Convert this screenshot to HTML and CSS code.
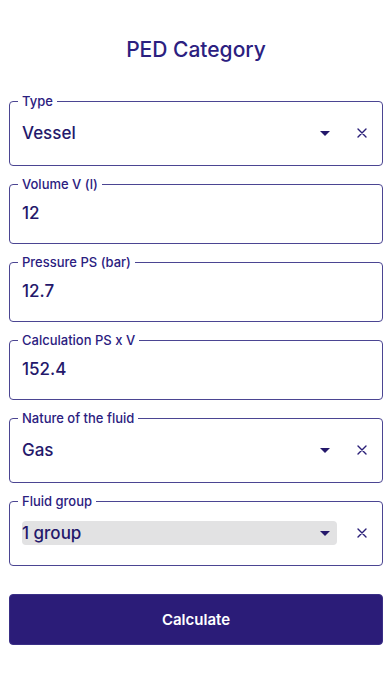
FILE: index.html
```html
<!DOCTYPE html>
<html lang="en">
<head>
<meta charset="utf-8">
<meta name="viewport" content="width=device-width, initial-scale=1">
<title>PED Category</title>
<link rel="stylesheet" href="styles.css">
</head>
<body>
<main class="page">
  <h1 class="title">PED Category</h1>
  <form class="form">
    <fieldset class="field field-select">
      <legend class="label">Type</legend>
      <div class="row">
        <div class="select"><span class="value">Vessel</span><span class="caret"></span></div>
        <span class="clear"><svg width="10" height="10" viewBox="0 0 10 10"><path d="M1 1L9 9M9 1L1 9" stroke="#2a1f78" stroke-width="1.4" stroke-linecap="round"/></svg></span>
      </div>
    </fieldset>
    <fieldset class="field field-text">
      <legend class="label">Volume V (l)</legend>
      <div class="value">12</div>
    </fieldset>
    <fieldset class="field field-text">
      <legend class="label">Pressure PS (bar)</legend>
      <div class="value">12.7</div>
    </fieldset>
    <fieldset class="field field-text">
      <legend class="label">Calculation PS x V</legend>
      <div class="value">152.4</div>
    </fieldset>
    <fieldset class="field field-select">
      <legend class="label">Nature of the fluid</legend>
      <div class="row">
        <div class="select"><span class="value">Gas</span><span class="caret"></span></div>
        <span class="clear"><svg width="10" height="10" viewBox="0 0 10 10"><path d="M1 1L9 9M9 1L1 9" stroke="#2a1f78" stroke-width="1.4" stroke-linecap="round"/></svg></span>
      </div>
    </fieldset>
    <fieldset class="field field-select">
      <legend class="label">Fluid group</legend>
      <div class="row">
        <div class="select select-focus"><span class="value">1 group</span><span class="caret"></span></div>
        <span class="clear"><svg width="10" height="10" viewBox="0 0 10 10"><path d="M1 1L9 9M9 1L1 9" stroke="#2a1f78" stroke-width="1.4" stroke-linecap="round"/></svg></span>
      </div>
    </fieldset>
    <button type="button" class="btn">Calculate</button>
  </form>
</main>
</body>
</html>
```
FILE: styles.css
```css
* { box-sizing: border-box; }
html, body { margin: 0; padding: 0; background: #ffffff; }
body {
  font-family: Inter, "Noto Sans", "Liberation Sans", sans-serif;
  color: #24186b;
}
.page {
  padding: 36px 9px 0 9px;
}
.title {
  margin: 0;
  height: 28px;
  line-height: 28px;
  font-size: 21px;
  font-weight: 500;
  text-align: center;
  color: #2b2080;
}
.form {
  margin-top: 29px;
  display: flex;
  flex-direction: column;
  gap: 10px;
}
.field {
  margin: 0;
  min-width: 0;
  border: 1px solid #4b4592;
  border-radius: 4px;
  padding: 0 12px;
}
.label {
  margin-left: -4px;
  padding: 0 4px;
  font-size: 13px;
  line-height: 16px;
  font-weight: 500;
  color: #2b2080;
}
.value {
  font-size: 17px;
  font-weight: 500;
  line-height: 22px;
  color: #24186b;
}
.field-text .value {
  padding: 10px 0 19px 0;
}
.field-select .row {
  display: flex;
  align-items: center;
  padding: 12px 0 20px 0;
}
.select {
  flex: 1;
  height: 24px;
  display: flex;
  align-items: center;
  justify-content: space-between;
  padding-right: 7px;
  border-radius: 4px;
}
.select-focus {
  background: #e2e2e3;
}
.caret {
  width: 0;
  height: 0;
  border-left: 5px solid transparent;
  border-right: 5px solid transparent;
  border-top: 5px solid #24186b;
}
.clear {
  width: 33px;
  display: flex;
  justify-content: flex-end;
  padding-right: 3px;
}
.clear svg { display: block; }
.btn {
  margin-top: 18px;
  height: 51px;
  width: 100%;
  border: 1px solid #3a2f86;
  border-radius: 4px;
  background: #2b1c78;
  color: #ffffff;
  font-family: Inter, "Noto Sans", "Liberation Sans", sans-serif;
  font-size: 15px;
  font-weight: 600;
}
```
